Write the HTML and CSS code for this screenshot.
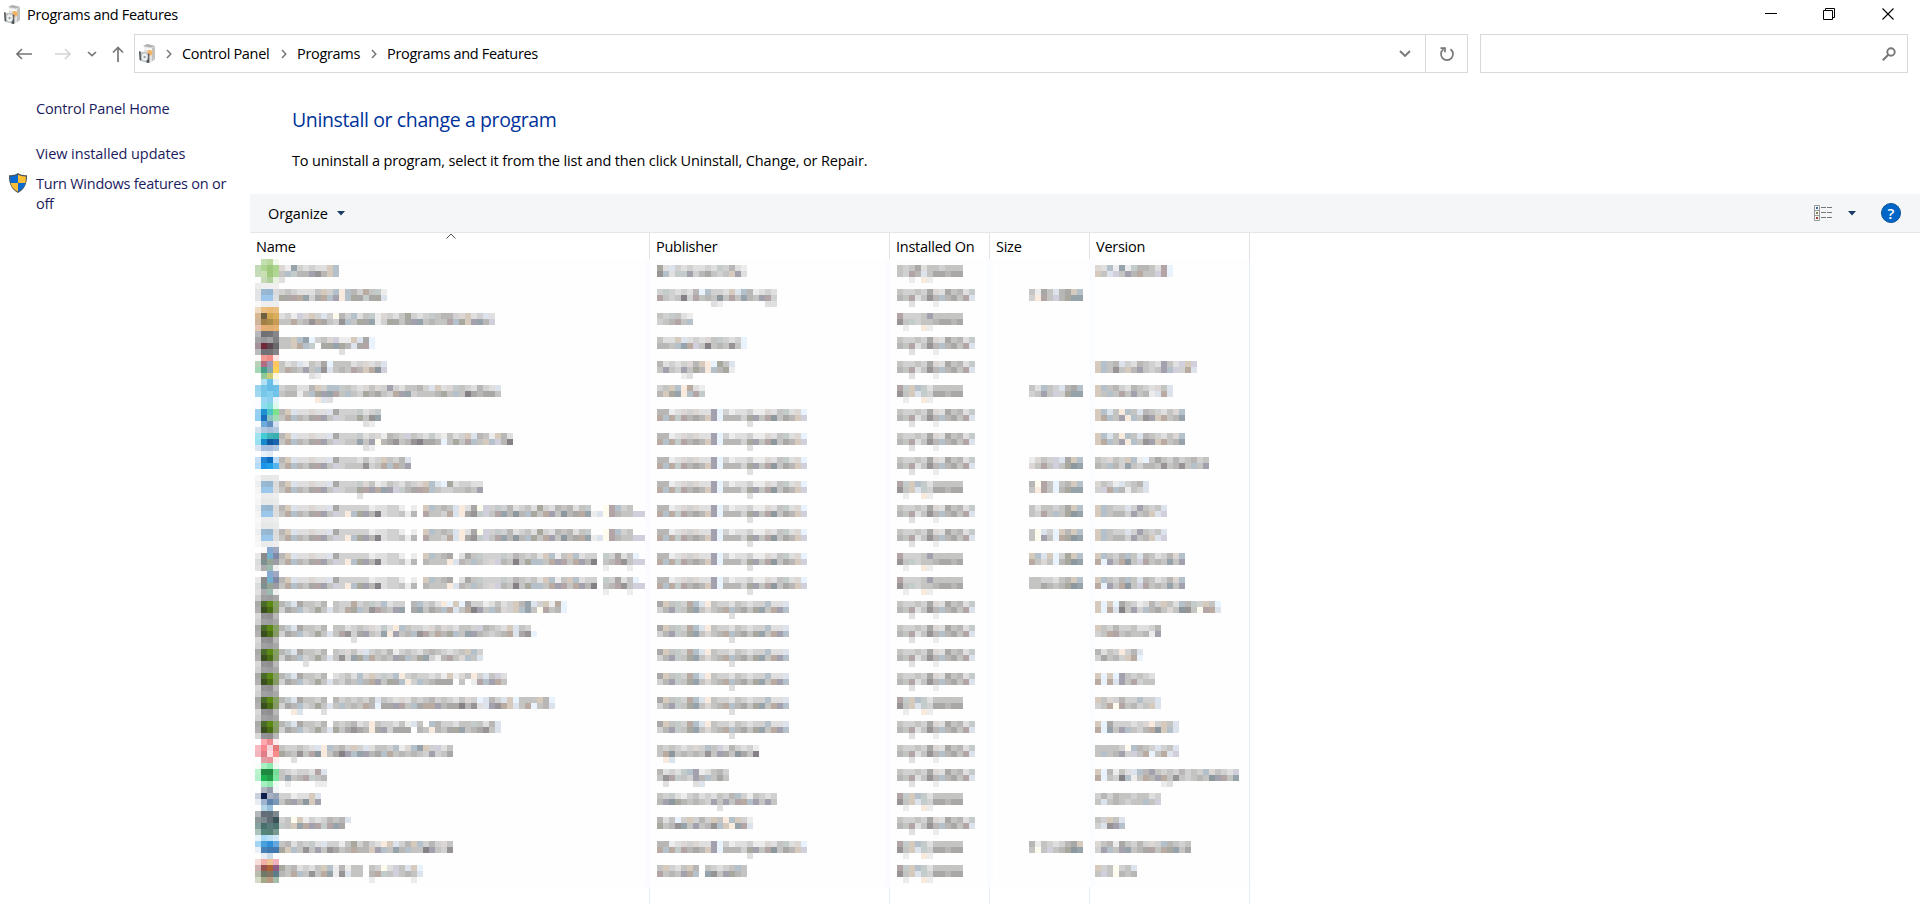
FILE: index.html
```html
<!DOCTYPE html>
<html lang="en">
<head>
<meta charset="utf-8">
<title>Programs and Features</title>
<link rel="stylesheet" href="styles.css">
</head>
<body>
<svg class="defs" width="0" height="0">
  <symbol id="box" viewBox="0 0 16 20">
    <path d="M5 2l5-2 6 2v13l-5 3.500-6-2z" fill="#e3e3e1"/>
    <path d="M4 2l4-2 8 2-4 1.500z" fill="#b0b0ae"/>
    <path d="M13 4l3-1.500v12.500l-3 2.500z" fill="#c3c3c1"/>
    <path d="M5 3.500l8 1v2l-8-1z" fill="#f7f7f5"/>
    <circle cx="10.800" cy="8.800" r="2.800" fill="#f6b566"/>
    <path d="M1 7.500l9 1.500v10l-8-2z" fill="#c4c8ca"/>
    <path d="M0 7l1.600.8.600 9L.6 16z" fill="#4b5054"/>
    <path d="M9.300 9.500h1v9.500l-3-.6z" fill="#4b5054"/>
    <ellipse cx="5.600" cy="13" rx="3.400" ry="4.200" fill="#eceff0" stroke="#a3a8ab" stroke-width=".7"/>
    <circle cx="5.600" cy="13" r="1.100" fill="#8e9397"/>
  </symbol>
  <symbol id="chev" viewBox="0 0 6 10"><path d="M1 1l3.800 4L1 9" fill="none" stroke="#777" stroke-width="1.500"/></symbol>
</svg>

<header class="titlebar">
  <svg class="app-icon" width="16" height="20"><use href="#box"/></svg>
  <span class="title">Programs and Features</span>
  <div class="controls">
    <svg class="min" width="12" height="12"><path d="M0 5.500h12" stroke="#000"/></svg>
    <svg width="12" height="12" fill="none" stroke="#000"><path d="M.5 2.500h9v9h-9zM2.500 2.500v-2h9v9h-2"/></svg>
    <svg width="12" height="12" stroke="#000" stroke-width="1.100"><path d="M.5.500l11 11M11.500.500l-11 11"/></svg>
  </div>
</header>

<nav class="navbar">
  <div class="arrows">
    <svg class="back" width="16" height="12" fill="none" stroke="#777" stroke-width="1.600"><path d="M1 6h15M6 1L1 6l5 5"/></svg>
    <svg class="forward" width="16" height="12" fill="none" stroke="#d4d4d4" stroke-width="1.600"><path d="M0 6h15M10 1l5 5-5 5"/></svg>
    <svg class="recent" width="10" height="6" fill="none" stroke="#777" stroke-width="1.700"><path d="M1 1l4 3.700L9 1"/></svg>
    <svg class="up" width="12" height="16" fill="none" stroke="#777" stroke-width="1.700"><path d="M6 16V1M1 6.500l5-5 5 5"/></svg>
  </div>
  <div class="address">
    <div class="crumbs">
      <svg class="crumb-icon" width="16" height="20"><use href="#box"/></svg>
      <svg class="sep first" width="6" height="10"><use href="#chev"/></svg>
      <span class="crumb cp">Control Panel</span>
      <svg class="sep" width="6" height="10"><use href="#chev"/></svg>
      <span class="crumb pr">Programs</span>
      <svg class="sep" width="6" height="10"><use href="#chev"/></svg>
      <span class="crumb">Programs and Features</span>
      <svg class="drop" width="12" height="8" fill="none" stroke="#777" stroke-width="1.900"><path d="M1 1l5 5 5-5"/></svg>
    </div>
    <div class="refresh">
      <svg width="16" height="16" fill="none" stroke="#777" stroke-width="1.700"><path d="M11.500 3.200A6 6 0 1 1 4.500 3.200M1.500 2.200H6v4"/></svg>
    </div>
  </div>
  <div class="search">
    <svg width="14" height="14" fill="none" stroke="#777"><circle cx="9" cy="5" r="3.700" stroke-width="1.900"/><path d="M6.300 7.700L.8 13.200" stroke-width="2"/></svg>
  </div>
</nav>

<div class="page">
  <aside class="sidebar">
    <a class="home">Control Panel Home</a>
    <a class="updates">View installed updates</a>
    <div class="feature">
      <svg width="18" height="20" viewBox="0 0 18 20">
        <path d="M9 0c2.500 1.900 5.500 2.400 9 2.200C18.200 10 16 16.500 9 20 2 16.500-.2 10 0 2.200 3.500 2.400 6.500 1.900 9 0z" fill="#4b5258"/>
        <path d="M9 1.500V10H1.600C1.200 8 1.100 6 1.200 3.400 4 3.400 6.700 3 9 1.500zM9 10h7.400c-.9 3.700-3.200 6.700-7.400 8.700z" fill="#0a6ad4"/>
        <path d="M9 1.500V10h7.400c.4-2 .5-4 .4-6.600C14 3.400 11.300 3 9 1.500zM9 10H1.600c.9 3.700 3.200 6.700 7.400 8.700z" fill="#fdbe35"/>
      </svg>
      <a>Turn Windows features on or off</a>
    </div>
  </aside>
  <main class="main">
    <section class="intro">
      <h1>Uninstall or change a program</h1>
      <p>To uninstall a program, select it from the list and then click Uninstall, Change, or Repair.</p>
    </section>
    <div class="toolbar">
      <span class="organize">Organize</span>
      <svg class="tri" width="8" height="5"><path d="M0 0h8L4 4.500z" fill="#1a3b66"/></svg>
      <div class="tools">
        <svg width="19" height="16" fill="none"><path d="M.5.500h5v15h-5zM.5 5.500h5M.5 10.500h5" stroke="#999"/><path d="M7 2.500h5M13 2.500h5M7 7.500h5M13 7.500h5M7 12.500h5M13 12.500h5" stroke="#777"/><path d="M2 2h2v2H2z" fill="#3d6c96"/><path d="M2 7h2v2H2z" fill="#7b8b4b"/><path d="M2 12h2v2H2z" fill="#a5412a"/></svg>
        <svg class="tri" width="8" height="5"><path d="M0 0h8L4 4.500z" fill="#1a3b66"/></svg>
        <span class="help">?</span>
      </div>
    </div>
    <div class="list-head">
      <div class="col">Name<svg class="sort" width="10" height="6" fill="none" stroke="#555"><path d="M.5 5.500L5 1l4.500 4.500"/></svg></div>
      <div class="col">Publisher</div>
      <div class="col">Installed On</div>
      <div class="col">Size</div>
      <div class="col">Version</div>
    </div>
    <div class="list" id="list"></div>
    <div class="list-rest"><i></i><i></i><i></i><i></i><i></i></div>
  </main>
</div>
<script src="list.js"></script>
</body>
</html>
```

FILE: styles.css
```css
* { box-sizing: border-box; }
body {
  margin: 0;
  height: 904px;
  overflow: hidden;
  background: #fff;
  color: #000;
  font: 14.5px/20px "Open Sans", "Noto Sans", sans-serif;
  letter-spacing: -0.32px;
  display: flex;
  flex-direction: column;
}
svg { display: block; flex: none; }
.defs { position: absolute; }

.titlebar { height: 30px; flex: none; display: flex; align-items: center; padding: 0 26px 0 4px; }
.title { margin-left: 7px; }
.controls { margin-left: auto; display: flex; gap: 47px; padding-bottom: 2px; }
.min { margin-right: -1px; }

.navbar { height: 47px; flex: none; display: flex; align-items: flex-start; padding: 4px 12px 0 16px; }
.arrows { width: 118px; height: 39px; display: flex; align-items: center; }
.forward { margin-left: 23px; }
.recent { margin-left: 16px; }
.up { margin: 1px 0 0 15px; }
.address { width: 1334px; height: 39px; border: 1px solid #d9d9d9; display: flex; }
.crumbs { flex: 1; display: flex; align-items: center; padding: 0 14px 0 4px; }
.sep { margin: 0 10px 0 11px; }
.crumb { white-space: nowrap; }
.cp { width: 88px; }
.pr { width: 63px; }
.drop { margin-left: auto; }
.refresh { width: 42px; border-left: 1px solid #d9d9d9; display: flex; align-items: center; justify-content: center; }
.search { width: 428px; height: 39px; margin-left: 12px; border: 1px solid #d9d9d9; display: flex; align-items: center; justify-content: flex-end; padding-right: 11px; }

.page { flex: 1; display: flex; }
.sidebar { width: 250px; padding-top: 22px; color: #1b1b5e; display: flex; flex-direction: column; letter-spacing: -0.15px; }
.home, .updates { padding-left: 36px; }
.updates { margin-top: 25px; letter-spacing: -0.08px; }
.feature { margin-top: 10px; padding-left: 9px; display: flex; gap: 9px; align-items: flex-start; letter-spacing: -0.25px; }
.feature svg { margin-top: -1px; }
.feature a { width: 200px; }

.main { flex: 1; display: flex; flex-direction: column; }
.intro { height: 117px; padding: 29px 0 0 42px; }
h1 { margin: 0; font-size: 19.5px; line-height: 28px; font-weight: 400; color: #039; letter-spacing: -0.38px; }
.intro p { margin: 17px 0 0; letter-spacing: -0.157px; }
.toolbar { height: 39px; background: #f4f6f8; border-bottom: 1px solid #e4e6e8; display: flex; align-items: center; padding: 0 19px 0 18px; }
.organize { width: 61px; padding-top: 2px; letter-spacing: -0.1px; }
.toolbar > .tri { margin-left: 8px; }
.tools { margin-left: auto; display: flex; align-items: center; }
.tools .tri { margin: 0 25px 0 15px; }
.help { width: 20px; height: 20px; border-radius: 50%; background: #0067c8; border: 1px solid #084f93; color: #fff; text-align: center; font-size: 15px; line-height: 18px; font-weight: 600; letter-spacing: 0; }

.list-head, .list-rest, .row { display: grid; grid-template-columns: 400px 240px 100px 100px 160px; }
.list-head { height: 26px; }
.col { position: relative; padding: 4px 0 0 6px; border-right: 1px solid #e2e2e2; letter-spacing: -0.25px; }
.sort { position: absolute; left: 196px; top: 0; }
.list {
  width: 1000px;
  height: 628px;
  border-right: 1px solid #e3edf9;
  background:
    linear-gradient(#fafcff, #fafcff) 395px 0 / 6px 100% no-repeat,
    linear-gradient(#fafcff, #fafcff) 635px 0 / 6px 100% no-repeat,
    linear-gradient(#fafcff, #fafcff) 737px 0 / 6px 100% no-repeat,
    linear-gradient(#fafcff, #fafcff) 839px 0 / 6px 100% no-repeat,
    #fefefe;
}
.row { height: 24px; }
.mosaic { shape-rendering: crispEdges; }
.name { margin-left: 5px; }
.publisher, .installed { margin-left: 7px; }
.size { margin-left: 39px; }
.version { margin-left: 5px; }
.list-rest { width: 1000px; flex: 1; }
.list-rest i { border-right: 1px solid #e6eff9; }
```

FILE: list.js
```js
// Shades used by the obscured cells, one letter for each.
const shades = {
  a: '#ececec', b: '#dedfde', c: '#d0d1d0', d: '#c4c4c3', e: '#b8b7b6', f: '#aaa8a7',
  g: '#989495', h: '#868186', p: '#f8eadd', o: '#d6cabc', t: '#b9aba1', s: '#dce3ec',
  q: '#e8f3fd', u: '#b4c1ca', v: '#97a3aa', l: '#d0cfdb', m: '#a4a1ae', k: '#dcd6d5',
  r: '#b3a4a5', n: '#c4cccb', w: '#a9a89e', z: '#8c989d', y: '#fcfbee'
};
const CELL = 6;

// 4x4 icon colours, row by row.
const doc = 'f6f6f6 e6e8e8 e6e8e8 e8eaea eeeff0 9ab8d2 96b6d0 dadcde f4f4f4 9cc6ea 9cc6ea dcdede f8f8f8 eaecec eaecec eeeeee';
const redist = 'ffffff fafafa 88a8d4 a0a8c0 e8e8e8 8a8a8a 74b0d0 8088a8 dadcdc 7c9090 98a494 9c9ca4 e0e0e0 acacac 9cbab0 f0f0f2';
const green = 'd0d0d0 a0a0a2 9c9c9e a8a8a8 a8aaa8 4a6a2a 5c8814 84a060 b0b0b0 384e20 486c14 869a66 d8d8d8 949496 8e8e90 b8b8b8';

// Shared beginnings of the names: top line and bottom line.
const msT = 'eosbbkbbsfccc', msB = 'dtuedfrmdlcdd';
const nvT = 'ensfddce.', nvB = 'cfeucdwds';
const ms = 'eeabkckbbmqcabbcaakbdnbkq|tutnrefeomqeeecwmdrzdfeol|...............b';
const nv = 'fodnctuspdccbdcbccubbs|cemndwvdkdetuefdwvdtmu|............b';
// Dates: short and long forms.
const S = 'rnounbddddd|gdosncffeff|.a..pa';
const S2 = 'rcccdmddddd|gdncddeffef|.a..pa';
const S3 = 'dcdfbddcddd|dcresdffeff|..a.pa';
const L = 'dccdcfkbfdebn|edrbdgeuefdrs|..b...a';
const distBottom = msB.slice(0, 11) + 'puwmehbccdae.';
const distA = msT + 'ccabbcca.a.oudedspbfylcncebcdbwcbedebdn..yrucd|' + distBottom + 'rddctspfgnldrvezeuwdtmdzeftvasyreddll';
const distB = msT + 'ccabbcca.a.oudef.bfdncccncedcdbouadoubcc.ncfbdq|' + distBottom + 'edddpsedudckledhdwuudtmrdtmeh.dergdll|......................................................a...a';

const rows = [
  ['ffffff c2e0b0 b8da9c f0f8ea c2dab6 aed690 9fc97c acd68e c6dcb8 c8e0b4 9eca7c b0d894 fdfdfd c6dab8 b2d09a e8f2e0', 'kavcbcbbou|duneemgeou|b', 'wbscbcbbcbnceba|gubnnmcefdcdomb', S3, '', 'kbuavaneedbrq|odsldmetddlrq'],
  ['ececec f0f0f0 f0f0f0 f0f0f0 e2e4e6 9ab8d2 94b6d2 d8dadc e2e4e6 9cc6ea 9cc6ea dcdee0 f8f8f8 eeeeee eeeeee eeeeee', 'cdcbbbdocupuectdna|wfrtvcftumpuwfnfws', 'cncbcbequccbosueabcb|rdcdhcrdedzdrdvedmrc|.........ba.......bb', L, 'dafdsefou|cprdlewvv', ''],
  ['f0dac0 eabe80 e8b874 e8be80 d8b890 6e6040 d0a44c daae5c ceb498 a08048 a88a4a c89c54 e8c4b0 e4ae74 e0ae70 e4b272', 'bcalkocscyecubdnakcbdwcbcndeeckobcsb|ddtdegtfdcgudwfvacwfdfmvdeddruwomvel', 'dcndba|cderdu', S2, '', ''],
  ['b8b8ba 707074 747478 88888c a4a4a8 98989a a2a2a4 808084 a4929a 70283a 5c4650 68686c bcbcbe 727276 727276 848488', 'ddouvqcdklaaosfq|ddotun.fwvwesfrq|..........b', 'dbbosbcbkdncbcq|eeduvtldhdedgdq', L, '', ''],
  ['fffafa f49a94 f08a82 fde4e2 bcd2b8 b46c80 9c98b6 fcc660 a4d8b4 4a9e8c 84aab0 ffd058 ffffff 90ca9c cccc74 fff4dc', 'dbcsadcfqdddbckbcs|dtedmdugsdedreotzl|.....ba', 'ebcbckeopqwds|dmdcmdwepuewa|....ab', L, '', 'oudescbedcbmdblol|oudgdoemdcdmulcts'],
  ['ffffff b2e0f2 68bfe8 e0f2fa 98d4f0 74c6ea 66bee8 6cc0e8 a0d8f0 78c8ea 84cef0 70c4ea f8fcff 98d6f2 8cd0f0 e4f4fc', 'cddbbeocuundcbkdkcmcbddecsobkndcbecbs|deeaduwmvrdudcwefdctmvcdddewdudhfeffd|......psb', 'cdouptba|eowvpurn', S, 'dbudcsefu|cdmdlcwvv', 'oudecbedcbkds|odudrdmdeasts'],
  ['fafcff 8edcf2 7cdcdc dcf8e8 98d0f2 1c90d0 4cc4c6 7ce28e 90cef4 1a70bc 8cc4c2 a2dcb4 fafcff 6cacdc 6090c0 d4dff0', msT + 'nbcn|' + msB + 'wdgv|..............ba', ms, L, '', 'ousdpudsedcbdku|otudmpudgmotdev'],
  ['d4e2f0 b0c8e0 a8c0dc b0c8e0 a0e4f0 44ccd4 40b4b8 38b0b0 98e0f2 1888cc 1058a0 1c64ac d8e4f2 a8c0e0 a8bcdc b4c8e0', msT + 'nbckaedcldcbnbadbcosedaoeb|' + msB + 'vdmyefgdeghffeqdwdrudouleh|..............ba', ms, L, '', 'ousdpudsedcbdku|otudmpudgmotdev'],
  ['ffffff e8f0fa dfe9f6 ffffff c4e0f8 2084d4 0c6cc0 b8daf6 b4dcf8 1c94ec 20a0e8 54b4ee ffffff ffffff ffffff ffffff', msT + 'bdbcodces|' + msB + 'dgcdtutem', ms, L, 'akdclsfou|kdrdldwzv', 'dckdcouaqdfdcecdecd|eduecvdceedgdegdudm'],
  [doc, msT + 'nkdabdcbdckousqwbccbb|' + msB + 'wrmtvmlnefrtudccddedm|.............b', ms, S, 'eyrdqdeou|dprdqewvv', 'kdcascdes|cltueadcs'],
  [doc, distA, ms, L, 'dbddcdfou|dcrdudwzv', 'oudccscmdcds|oudeecmdeosl'],
  [doc, distA, ms, L, 'dyscqoeou|dymdqtwzv', 'oudccscmdcds|oudeecmdeosl'],
  [redist, distB, ms, S2, 'ousoqcwou|tdkdqewzv', 'oudceudsedbceku|tqmdtzdlrdedvdm'],
  [redist, distB, ms, S2, 'ddccbdeou|ddfedewzv', 'oudceudsedbceku|tqmdtzdlrdedvdm'],
  [green, nvT + 'dcctcdncubcc.eucdbpqoqfccabdbcoevscoatq|' + nvB + 'dctwudgredmv.fvdfeutsdthmduekcouvdyrdeq', nv, L, '', 'oqoqfdcabecodbuencodq|oqtshdmcuefdkdzgdyrts'],
  [green, nvT + 'ddbcdckbnbpudccbkdkcbddcledcbosdc|' + nvB + 'drgcfmdcvpmdeugrdtewudvmedcdetsfgq|............b', nv, L, '', 'odceccdbbce|cdtrdeddeam'],
  [green, nvT + 'dckdbscdceacdcbdedcbcdouc|' + nvB + 'dgcvwutdedmfudwvcaerdkuds|....b', nv, L, '', 'ebdcpces|cfdecotq'],
  [green, nvT + 'bcdbukocncupcdccbcaoakdpcsdlb|' + nvB + 'dceduetmdwfupcudefff.d.arumtd', nv, L, '', 'oqoqmdcdcb|tqtsmdrcdd'],
  [green, nvT + 'ecdcdcesdcbkbdcdecdcbdkcqsecsoqdddoeq|' + nvB + 'dudedteqffmrdufttmeffhegbsmgtosdtqdes|..ps...b', nv, S, '', 'odkceccuccs|cdtyrdecdos'],
  [green, nvT + 'dcdebcpdccbdasd.ueccbddndbes|' + nvB + 'wdfgfepfmcfff.edpedfwvdefgds', nv, L, '', 'oqfcccbckpcods|tqvdmudcetzous'],
  ['ffffff ffa8b0 ee8a90 ffecec f8bac0 f88890 f4d4d8 e47a7c f4b4bc e07c88 ffdce0 fa8c8c ffffff e0a0a8 e8949c ffecec', 'dccdcbspudecocsbddcuakuvoclbd|wedgdrzpdfhmuvmefutdededcmcdf|..b', 'dcdcbckcudlbecbca|dtzdededgdmfdzfdh|.ps', L, '', 'ddddcyuedcscds|dudemcldtqdtsl'],
  ['f8fff8 a8f0c0 8ceab0 ecfaf0 b8f4cc 1f8840 1f8840 76dc98 b4f0cc 1cb450 209c48 7ce6a0 ffffff a4f0c0 90eab0 ecfaf0', 'dcbccbrs|dvdernde|.a....aa', 'ebcbnumabdec|dgrndcmeudfd|.b....bs', L, '', 'oqeadbsuemdcdcecdcukdcbl|tqdchuadtemtdgdcdedzmrdv|...........ab'],
  ['ffffff b0b4c0 949cac f4f4f8 c8d0dc 10204c a8b0c4 98a4b8 e8ecf4 a0b4d0 5c84ac 7c98b8 ffffff b4d4e8 98c0dc ffffff', 'ccabbos|dfmezom', 'dcnbacdbcbdceucadcbc|emzwededcmdmdrtumdmd|..........b', S, '', 'ceceddcddbc|dsdedcddudl'],
  ['b4b8bc 646e78 606e78 808890 8c9898 7c8890 606c74 3c5058 84a0a0 48706c 5a7c7c 4c7470 acc4bc 54847c 548078 789890', 'cdyoacbcedes|ndovtmrnrvf', 'ebdqcocecodpuoca|wdegvdmdeguopvrs', L, '', 'dcods|csgmu'],
  ['e8f4fc a8d8f4 bce0f4 d0e8f8 a4d4f4 48a0dc 3090d8 64a8dc eaf0f8 4880b8 4078b0 4478b0 ffffff e8eef6 ccdce8 ffffff', 'debdcnbsccadwcecbposceouceckodc|woudgdmdgfdeteeomudveuddhmdcg'.replace('odc|', 'd|'), ms, S, 'eadcbcefo|dydldewzv', 'kdeafdceckcuedcd|cmudmvdefrdtwvdf'],
  ['f8dcd8 f0b0a8 ecc498 f0b0c0 d0b0b0 985450 ac6434 905c88 b8bcac 707868 847464 5c7c88 d4dcc8 a4a888 b89880 a4bca8', 'wdebcbdouaeadd.dcybldsoq|edtudgdtvagsdd.etndldeds|...............a......a', 'docbdoe.dcbcdud|rdedmtu.vgdmwed', S, '', 'ocdycds|dldyede']
];

function rect(x, y, fill) {
  return `<rect x="${x * CELL}" y="${y * CELL}" width="${CELL}" height="${CELL}" fill="${fill}"/>`;
}

// text: top line | bottom line | descenders
function mosaic(kind, text, icon) {
  const lines = text.split('|');
  const offset = icon ? 4 : 0;
  let out = '';
  if (icon) icon.split(' ').forEach((c, i) => { out += rect(i % 4, Math.floor(i / 4), '#' + c); });
  lines.forEach((line, r) => {
    [...line].forEach((ch, i) => {
      if (shades[ch]) out += rect(i + offset, r + 1, shades[ch]);
    });
  });
  const cells = Math.min(65, Math.max(...lines.map(l => l.length)) + offset);
  return `<svg class="mosaic ${kind}" width="${cells * CELL}" height="24">${out}</svg>`;
}

document.getElementById('list').innerHTML = rows.map(([icon, name, publisher, installed, size, version]) =>
  `<div class="row">${mosaic('name', name, icon)}${mosaic('publisher', publisher)}${mosaic('installed', installed)}${mosaic('size', size)}${mosaic('version', version)}</div>`
).join('');
```
